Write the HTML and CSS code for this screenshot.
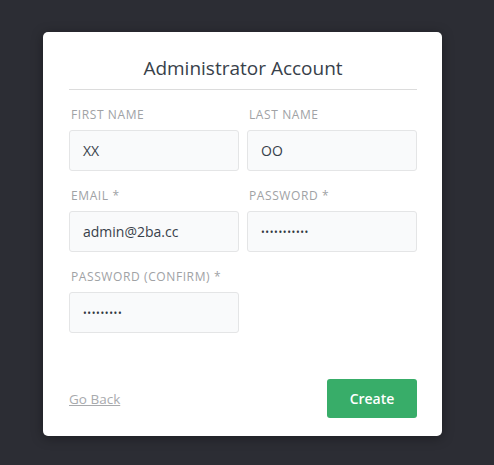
FILE: index.html
```html
<!DOCTYPE html>
<html>
<head>
<meta charset="utf-8">
<link rel="stylesheet" href="styles.css">
</head>
<body>
<div class="card">
  <h2 class="title">Administrator Account</h2>
  <div class="grid">
    <div class="field">
      <label class="label">First Name</label>
      <div class="input">XX</div>
    </div>
    <div class="field">
      <label class="label">Last Name</label>
      <div class="input">OO</div>
    </div>
    <div class="field">
      <label class="label">Email *</label>
      <div class="input">admin@2ba.cc</div>
    </div>
    <div class="field">
      <label class="label">Password *</label>
      <div class="input dots">•••••••••••</div>
    </div>
    <div class="field">
      <label class="label">Password (Confirm) *</label>
      <div class="input dots">•••••••••</div>
    </div>
  </div>
  <div class="footer">
    <a class="back" href="#">Go Back</a>
    <button class="create">Create</button>
  </div>
</div>
</body>
</html>
```
FILE: styles.css
```css
html, body {
  margin: 0;
  padding: 0;
  background: #2c2d34;
  height: 100%;
}
body {
  font-family: "Open Sans", "Noto Sans", sans-serif;
  padding-top: 32px;
  padding-left: 43px;
  box-sizing: border-box;
}
.card {
  width: 399px;
  height: 404px;
  box-sizing: border-box;
  background: #fff;
  border-radius: 5px;
  padding: 0 25px 0 26px;
  box-shadow: 0 2px 12px rgba(0,0,0,0.35);
  display: flex;
  flex-direction: column;
}
.title {
  margin: 0;
  padding: 25px 0 10px;
  font-size: 19px;
  line-height: 22px;
  font-weight: 400;
  color: #38414a;
  text-align: center;
  border-bottom: 1px solid #dcdcdc;
}
.grid {
  display: grid;
  grid-template-columns: 170px 170px;
  column-gap: 8px;
  row-gap: 0;
  margin-top: 17px;
}
.field {
  display: flex;
  flex-direction: column;
  height: 81px;
}
.label {
  font-size: 12px;
  line-height: 14px;
  letter-spacing: 0.6px;
  text-transform: uppercase;
  color: #a0a2a5;
  padding-left: 2px;
  margin-bottom: 8px;
  margin-top: 1px;
}
.input {
  height: 41px;
  box-sizing: border-box;
  background: #f9fafb;
  border: 1px solid #e4e5e6;
  border-radius: 3px;
  padding: 0 13px;
  display: flex;
  align-items: center;
  font-size: 14px;
  color: #38414a;
}
.dots {
  font-size: 10px;
  letter-spacing: 0.6px;
  color: #2f363d;
}
.footer {
  margin-top: auto;
  margin-bottom: 18px;
  display: flex;
  justify-content: space-between;
  align-items: center;
}
.back {
  color: #a8aaad;
  font-size: 13.5px;
  text-decoration: underline;
}
.create {
  width: 90px;
  height: 39px;
  border: none;
  border-radius: 3px;
  background: #38ad69;
  color: #fff;
  font-family: inherit;
  font-size: 14px;
  font-weight: 600;
}
```
